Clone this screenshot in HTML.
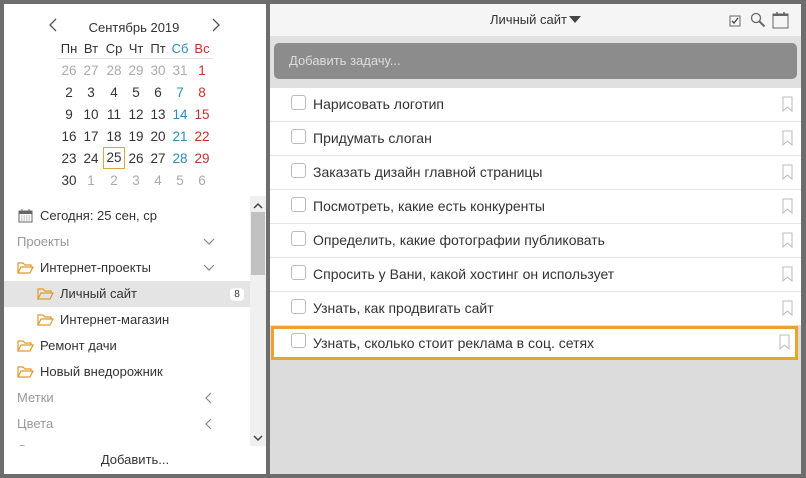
<!DOCTYPE html><html><head><meta charset="utf-8"><style>
*{box-sizing:border-box;margin:0;padding:0}
body{width:806px;height:478px;background:#6d6d6d;font-family:"Liberation Sans","DejaVu Sans",sans-serif;position:relative;overflow:hidden;color:#333}
.abs{position:absolute}
#left{left:4px;top:4px;width:262px;height:470px;background:#fff;overflow:hidden}
#right{left:270px;top:4px;width:531px;height:470px;background:#dcdcdc}
.c{position:absolute;width:22px;text-align:center;font-size:13.5px;line-height:16px}
.g{color:#aaa}.b{color:#2b8cb8}.r{color:#c9302c}
.it{position:absolute;left:0;width:246px;height:26px;line-height:26px;font-size:13px}
.fold{position:absolute;top:7px;width:17px;height:12px}
.row{position:absolute;left:0;width:531px;height:34px;background:#fff;border-bottom:1px solid #e4e4e4}
.cb{position:absolute;left:21px;top:7px;width:15px;height:15px;border:1px solid #bbb;border-radius:3px;background:#fff}
.tx{position:absolute;left:43px;top:0;line-height:32px;font-size:14px;color:#333}
.bm{position:absolute;right:8px;top:8px}
</style></head><body>
<div id="left" class="abs">
 <svg class="abs" style="left:44px;top:14px" width="10" height="14"><path d="M8 1 2 7l6 6" fill="none" stroke="#555" stroke-width="1.3"/></svg>
 <div class="abs" style="left:60px;top:16px;width:140px;text-align:center;font-size:13px">Сентябрь 2019</div>
 <svg class="abs" style="left:207px;top:14px" width="10" height="14"><path d="M2 1l6 6-6 6" fill="none" stroke="#555" stroke-width="1.3"/></svg>
 <div class="abs" style="left:53px;top:54px;width:156px;height:1px;background:#e2e2e2"></div>
 <div id="cal"></div>
 <div class="it" style="top:433px;left:13px;color:#999">Статусы</div>
 <div class="abs" style="left:246px;top:192px;width:16px;height:250px;background:#f0f0f0"></div>
 <div class="abs" style="left:247px;top:208px;width:14px;height:63px;background:#c1c1c1"></div>
 <svg class="abs" style="left:249px;top:198px" width="10" height="8"><path d="M1 6l4-4 4 4" fill="none" stroke="#444" stroke-width="1.5"/></svg>
 <svg class="abs" style="left:249px;top:430px" width="10" height="8"><path d="M1 2l4 4 4-4" fill="none" stroke="#444" stroke-width="1.5"/></svg>
 <svg class="abs" style="left:14px;top:204px" width="15" height="15"><rect x="1" y="3" width="13" height="11" fill="none" stroke="#666"/><rect x="1" y="3" width="13" height="3" fill="#666"/><path d="M4 1v3M11 1v3" stroke="#666"/><path d="M3 8h9M3 10h9M3 12h9" stroke="#aaa" stroke-dasharray="1.5 1"/></svg>
 <div class="it" style="top:199px;left:36px;font-size:13px">Сегодня: 25 сен, ср</div>
 <div class="it" style="top:225px;left:13px;color:#999">Проекты</div>
 <svg class="abs" style="left:199px;top:234px" width="12" height="8"><path d="M1 1l5 5 5-5" fill="none" stroke="#888" stroke-width="1.2"/></svg>
 <div class="it" style="top:251px"><svg class="fold" style="left:13px" viewBox="0 0 17 12"><path d="M1 11V1h5l2 2h6v2M1 11l3-6h12l-3 6z" fill="none" stroke="#e09a2a" stroke-width="1.2"/></svg><span style="position:absolute;left:36px">Интернет-проекты</span></div>
 <svg class="abs" style="left:199px;top:260px" width="12" height="8"><path d="M1 1l5 5 5-5" fill="none" stroke="#888" stroke-width="1.2"/></svg>
 <div class="it" style="top:277px;background:#e4e4e4"><svg class="fold" style="left:33px" viewBox="0 0 17 12"><path d="M1 11V1h5l2 2h6v2M1 11l3-6h12l-3 6z" fill="none" stroke="#e09a2a" stroke-width="1.2"/></svg><span style="position:absolute;left:56px">Личный сайт</span><span style="position:absolute;left:226px;top:7px;width:14px;height:13px;line-height:13px;background:#fff;border-radius:4px;font-size:10px;text-align:center">8</span></div>
 <div class="it" style="top:303px"><svg class="fold" style="left:33px" viewBox="0 0 17 12"><path d="M1 11V1h5l2 2h6v2M1 11l3-6h12l-3 6z" fill="none" stroke="#e09a2a" stroke-width="1.2"/></svg><span style="position:absolute;left:56px">Интернет-магазин</span></div>
 <div class="it" style="top:329px"><svg class="fold" style="left:13px" viewBox="0 0 17 12"><path d="M1 11V1h5l2 2h6v2M1 11l3-6h12l-3 6z" fill="none" stroke="#e09a2a" stroke-width="1.2"/></svg><span style="position:absolute;left:36px">Ремонт дачи</span></div>
 <div class="it" style="top:355px"><svg class="fold" style="left:13px" viewBox="0 0 17 12"><path d="M1 11V1h5l2 2h6v2M1 11l3-6h12l-3 6z" fill="none" stroke="#e09a2a" stroke-width="1.2"/></svg><span style="position:absolute;left:36px">Новый внедорожник</span></div>
 <div class="it" style="top:381px;left:13px;color:#999">Метки</div>
 <svg class="abs" style="left:200px;top:388px" width="8" height="12"><path d="M7 1 2 6l5 5" fill="none" stroke="#888" stroke-width="1.2"/></svg>
 <div class="it" style="top:407px;left:13px;color:#999">Цвета</div>
 <svg class="abs" style="left:200px;top:414px" width="8" height="12"><path d="M7 1 2 6l5 5" fill="none" stroke="#888" stroke-width="1.2"/></svg>
 <div class="abs" style="left:0;top:442px;width:262px;height:28px;background:#fff;text-align:center;line-height:28px;font-size:13px">Добавить...</div>
</div>
<div id="right" class="abs">
 <div class="abs" style="left:0;top:0;width:531px;height:32px;background:#f5f5f5"></div>
 <div class="abs" style="left:220px;top:8px;font-size:13px;color:#333">Личный сайт</div>
 <svg class="abs" style="left:299px;top:12px" width="12" height="8"><path d="M0 0h12L6 7z" fill="#444"/></svg>
 <svg class="abs" style="left:459px;top:11px" width="12" height="12"><rect x="1" y="1" width="10" height="10" fill="none" stroke="#666"/><path d="M3 6l2 2 4-5" fill="none" stroke="#444" stroke-width="1.3"/></svg>
 <svg class="abs" style="left:480px;top:8px" width="16" height="16"><circle cx="6" cy="6" r="4.5" fill="none" stroke="#666" stroke-width="1.3"/><path d="M9.5 9.5l5 5" stroke="#666" stroke-width="2"/></svg>
 <svg class="abs" style="left:502px;top:7px" width="17" height="18"><rect x="1" y="3" width="15" height="14" fill="none" stroke="#666"/><path d="M1 4h15" stroke="#666" stroke-width="2"/><path d="M5 1v4M12 1v4" stroke="#666" stroke-width="1.5"/></svg>
 <div class="abs" style="left:0;top:32px;width:531px;height:52px;background:#e0e0e0"></div>
 <div class="abs" style="left:4px;top:39px;width:523px;height:36px;background:#8c8c8c;border-radius:5px;color:#ddd;font-size:13px;line-height:36px;padding-left:15px">Добавить задачу...</div>
 <div id="rows"></div>
</div>
<script>
var cal=document.getElementById('cal'),xs=[54,76,99,121,143,165,187],h='';
var hd=['Пн','Вт','Ср','Чт','Пт','Сб','Вс'];
hd.forEach(function(d,i){h+='<div class="c '+(i==5?'b':i==6?'r':'')+'" style="left:'+xs[i]+'px;top:37px;font-size:13px">'+d+'</div>'});
var w=[[26,27,28,29,30,31,1],[2,3,4,5,6,7,8],[9,10,11,12,13,14,15],[16,17,18,19,20,21,22],[23,24,25,26,27,28,29],[30,1,2,3,4,5,6]];
w.forEach(function(r,ri){r.forEach(function(d,i){var cl='';if((ri==0&&i<6)||(ri==5&&i>0))cl='g';else if(i==5)cl='b';else if(i==6)cl='r';
var st=(ri==4&&i==2)?'border:1px solid #d9a640;height:22px;line-height:20px;':'';
h+='<div class="c '+cl+'" style="left:'+xs[i]+'px;top:'+(ri*22+(st?55:59))+'px;'+st+'">'+d+'</div>'})});
cal.innerHTML=h;
var t=['Нарисовать логотип','Придумать слоган','Заказать дизайн главной страницы','Посмотреть, какие есть конкуренты','Определить, какие фотографии публиковать','Спросить у Вани, какой хостинг он использует','Узнать, как продвигать сайт','Узнать, сколько стоит реклама в соц. сетях'];
var s='';t.forEach(function(x,i){var last=i==7;
s+='<div class="row" style="top:'+(84+i*34)+'px;'+(last?'left:1px;width:527px;border:3px solid #eda12e;':'')+'"><div class="cb" style="'+(last?'left:17px;top:4px':'')+'"></div><div class="tx" style="'+(last?'left:39px;line-height:28px':'')+'">'+x+'</div><svg class="bm" style="'+(last?'right:5px;top:5px':'')+'" width="11" height="16"><path d="M1 1h9v14l-4.5-4L1 15z" fill="none" stroke="#bbb"/></svg></div>'});
document.getElementById('rows').innerHTML=s;
</script>
</body></html>
